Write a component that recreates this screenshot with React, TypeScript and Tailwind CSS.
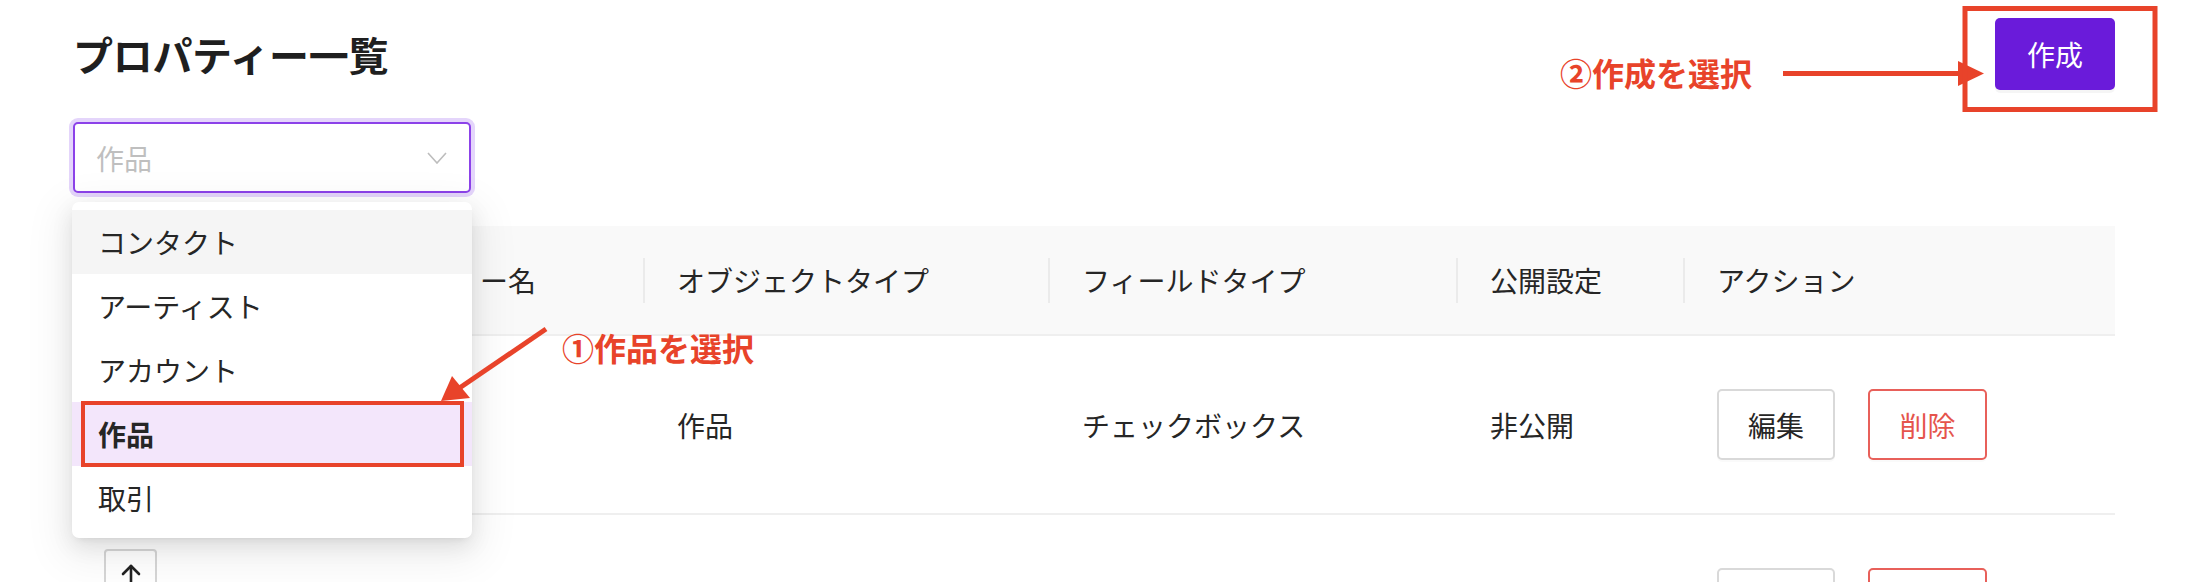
import React from "react";

const FONT = { fontFamily: '"Noto Sans CJK JP", "Noto Sans", sans-serif' };

function Divider() {
  return <div className="h-[45px] w-[2px] bg-[#ebebeb] shrink-0" />;
}

function HeaderCell({ w, label }: { w: string; label: string }) {
  return (
    <div className={`${w} flex items-center shrink-0`}>
      <Divider />
      <span className="ml-[32px] whitespace-nowrap">{label}</span>
    </div>
  );
}

function ArrowBtn({ dir }: { dir: "up" | "down" }) {
  return (
    <div className="w-[53px] h-[53px] border-2 border-[#d6d6d6] rounded-[4px] flex items-center justify-center bg-white">
      <svg width="22" height="26" viewBox="0 0 22 26" fill="none" stroke="#222" strokeWidth="2.6" strokeLinecap="round" strokeLinejoin="round">
        {dir === "up" ? (
          <>
            <path d="M11 24 V3" />
            <path d="M3 11 L11 3 L19 11" />
          </>
        ) : (
          <>
            <path d="M11 2 V23" />
            <path d="M3 15 L11 23 L19 15" />
          </>
        )}
      </svg>
    </div>
  );
}

function Row({ obj, field, pub, labels = true }: { obj: string; field: string; pub: string; labels?: boolean }) {
  return (
    <div className="flex h-[179px] border-b-2 border-[#efefef] text-[28px] text-[#262626]">
      <div className="w-[240px] shrink-0 pl-[31px] pt-[34px] flex flex-col gap-[4px]">
        <ArrowBtn dir="up" />
        <ArrowBtn dir="down" />
      </div>
      <div className="w-[330px] shrink-0 pl-[34px] flex items-center" />
      <div className="w-[405px] shrink-0 pl-[34px] flex items-center">{obj}</div>
      <div className="w-[408px] shrink-0 pl-[34px] flex items-center">{field}</div>
      <div className="w-[227px] shrink-0 pl-[34px] flex items-center">{pub}</div>
      <div className="flex-1 pl-[34px] flex items-center gap-[33px]">
        <button className="w-[118px] h-[71px] border-2 border-[#d9d9d9] rounded-[5px] bg-white text-[28px] text-[#262626] shadow-[0_2px_0_rgba(0,0,0,0.02)]">
          {labels ? "編集" : ""}
        </button>
        <button className="w-[119px] h-[71px] border-2 border-[#e8605a] rounded-[5px] bg-white text-[28px] text-[#e5544c] shadow-[0_2px_0_rgba(0,0,0,0.02)]">
          {labels ? "削除" : ""}
        </button>
      </div>
    </div>
  );
}

export default function App() {
  const items = ["コンタクト", "アーティスト", "アカウント", "作品", "取引"];
  return (
    <div className="relative w-[2206px] h-[582px] overflow-hidden bg-white text-[#222]" style={FONT}>
      <div className="pl-[73px] pr-[91px]">
        {/* top bar */}
        <div className="flex items-center justify-between pt-[18px]">
          <h1 className="text-[40px] leading-[48px] font-bold text-[#1f1f1f] tracking-[-0.3px]">プロパティー一覧</h1>
          <button className="w-[120px] h-[72px] rounded-[5px] bg-[#6a1bda] text-white text-[28px] shadow-[0_3px_0_rgba(0,0,0,0.04)]">
            作成
          </button>
        </div>

        {/* select */}
        <div className="relative mt-[32px] w-[398px]">
          <div className="h-[71px] border-2 border-[#8c42e9] rounded-[5px] ring-4 ring-[#e4d5fb] flex items-center justify-between pl-[21px] pr-[22px] bg-white">
            <span className="text-[28px] text-[#bfbfbf]">作品</span>
            <svg width="20" height="12" viewBox="0 0 20 12" fill="none" stroke="#bdbdbd" strokeWidth="1.6">
              <path d="M1 1 L10 11 L19 1" />
            </svg>
          </div>

          {/* dropdown menu */}
          <div className="absolute left-[-1px] top-full mt-[9px] z-20 w-[400px] bg-white rounded-[7px] py-[8px] shadow-[0_12px_40px_12px_rgba(0,0,0,0.06),0_8px_22px_0_rgba(0,0,0,0.09),0_4px_8px_-5px_rgba(0,0,0,0.12)]">
            {items.map((it, i) => (
              <div
                key={it}
                className={`relative h-[64px] flex items-center pl-[26px] text-[28px] text-[#262626] ${
                  i === 0 ? "bg-[#f5f5f5]" : ""
                } ${i === 3 ? "bg-[#f3e6fb] font-bold pl-[24px]" : ""}`}
              >
                {it}
                {i === 3 && (
                  <div className="absolute left-[9px] right-[8px] top-[-1px] bottom-[-1px] border-[4px] border-[#e8432a]" />
                )}
              </div>
            ))}
          </div>
        </div>

        {/* table */}
        <div className="mt-[33px]">
          <div className="flex h-[110px] bg-[#f9f9f9] border-b-2 border-[#efefef] text-[28px] text-[#262626]">
            <div className="w-[240px] shrink-0" />
            <div className="w-[330px] shrink-0 flex items-center justify-end pr-[107px]">
              <span className="whitespace-nowrap">ー名</span>
            </div>
            <HeaderCell w="w-[405px]" label="オブジェクトタイプ" />
            <HeaderCell w="w-[408px]" label="フィールドタイプ" />
            <HeaderCell w="w-[227px]" label="公開設定" />
            <div className="flex-1 flex items-center">
              <Divider />
              <span className="ml-[32px]">アクション</span>
            </div>
          </div>
          <Row obj="作品" field="チェックボックス" pub="非公開" />
          <Row obj="" field="" pub="" labels={false} />
        </div>
      </div>

      {/* annotations */}
      <svg className="absolute left-0 top-0 z-30 pointer-events-none" width="2206" height="582" viewBox="0 0 2206 582">
        <line x1="546" y1="329" x2="458" y2="389" stroke="#e8432a" strokeWidth="5" />
        <polygon points="441,401 452,376 470,398" fill="#e8432a" />
        <line x1="1783" y1="73.5" x2="1962" y2="73.5" stroke="#e8432a" strokeWidth="5" />
        <polygon points="1958,61 1984,73.5 1958,86" fill="#e8432a" />
        <rect x="1965" y="8.5" width="190" height="101" fill="none" stroke="#e8432a" strokeWidth="5" />
      </svg>
      <span className="absolute z-30 left-[562px] top-[326px] text-[32px] leading-[42px] font-bold text-[#e8432a] whitespace-nowrap">
        ①作品を選択
      </span>
      <span className="absolute z-30 left-[1560px] top-[51px] text-[32px] leading-[42px] font-bold text-[#e8432a] whitespace-nowrap">
        ②作成を選択
      </span>
    </div>
  );
}
